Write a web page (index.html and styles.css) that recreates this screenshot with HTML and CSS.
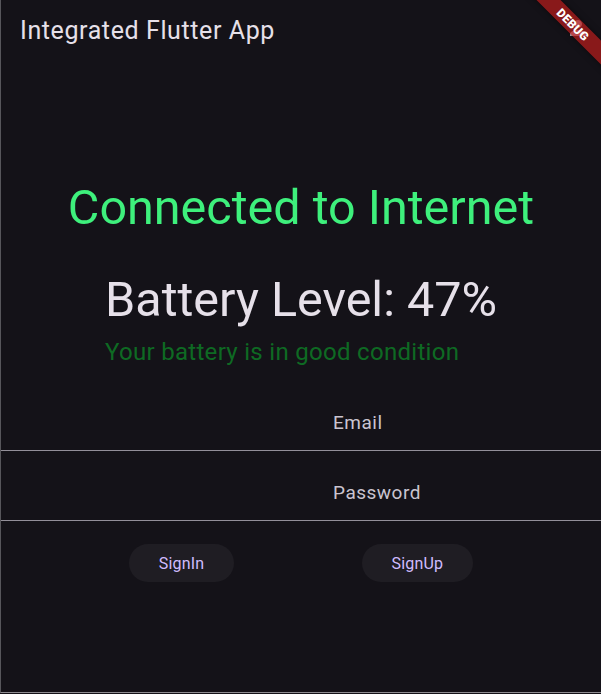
FILE: index.html
```html
<!DOCTYPE html>
<html>
<head>
<meta charset="utf-8">
<link rel="stylesheet" href="styles.css">
</head>
<body>
<div class="app">
  <header class="appbar">
    <span class="title">Integrated Flutter App</span>
    <button class="action" aria-label="account">
      <svg viewBox="0 0 24 24" width="24" height="24"><path fill="#b7b3bd" d="M12 12c2.21 0 4-1.790 4-4s-1.79-4-4-4-4 1.79-4 4 1.79 4 4 4zm0 2c-2.67 0-8 1.34-8 4v2h16v-2c0-2.66-5.33-4-8-4z"/></svg>
    </button>
  </header>
  <main class="content">
    <div class="status">Connected to Internet</div>
    <div class="battery">
      <div class="level">Battery Level: 47%</div>
      <div class="condition">Your battery is in good condition</div>
    </div>
    <div class="field field-first"><span class="label">Email</span></div>
    <div class="field field-second"><span class="label">Password</span></div>
    <div class="actions">
      <button class="pill">SignIn</button>
      <button class="pill">SignUp</button>
    </div>
  </main>
  <div class="debug-banner"><span>DEBUG</span></div>
</div>
</body>
</html>
```
FILE: styles.css
```css
* { box-sizing: border-box; }
html, body {
  margin: 0;
  padding: 0;
  background: #141218;
}
body {
  font-family: Roboto, "Noto Sans", sans-serif;
  color: #e6e0e9;
}
.app {
  position: relative;
  width: 601px;
  height: 693px;
  border-left: 1px solid #57565b;
  border-bottom: 1px solid #8d8b90;
  overflow: hidden;
  background: #141218;
}
.appbar {
  height: 64px;
  display: flex;
  align-items: center;
  justify-content: space-between;
  padding: 0 11px 0 19px;
}
.title {
  font-size: 25px;
  letter-spacing: 0.6px;
  color: #e6e0e9;
  margin-top: -3px;
}
.action {
  background: none;
  border: none;
  padding: 0;
  width: 24px;
  height: 24px;
  margin-top: -8px;
}
.action svg { display: block; }
.content {
  display: flex;
  flex-direction: column;
}
.status {
  margin-top: 117px;
  text-align: center;
  font-size: 48.5px;
  color: #3ef07c;
  line-height: 53px;
}
.battery {
  align-self: center;
  margin-top: 38px;
  display: flex;
  flex-direction: column;
}
.level {
  font-size: 48.5px;
  line-height: 56px;
  color: #e6e0e9;
}
.condition {
  margin-top: 11px;
  font-size: 24px;
  line-height: 26px;
  letter-spacing: 0.3px;
  color: #0e6a23;
}
.field {
  height: 69px;
  padding-top: 30px;
  padding-left: 332px;
  border-bottom: 1px solid #938f99;
}
.field-first {
  margin-top: 17px;
}
.field-second {
  height: 70px;
  padding-top: 31px;
}
.label {
  font-size: 19px;
  line-height: 21px;
  color: #cac4d0;
  letter-spacing: 0.5px;
}
.actions {
  margin-top: 23px;
  display: flex;
  justify-content: space-evenly;
}
.pill {
  height: 38px;
  padding: 0 29.5px;
  border: none;
  border-radius: 19px;
  background: #1f1d23;
  color: #d0bcff;
  font-family: Roboto, sans-serif;
  font-size: 16px;
  font-weight: 400;
  letter-spacing: 0.2px;
}
.debug-banner {
  position: absolute;
  left: 516px;
  top: 16px;
  width: 112px;
  height: 17px;
  transform: rotate(45deg);
  background: rgba(183, 28, 28, 0.72);
  box-shadow: 0 0 6px rgba(0, 0, 0, 0.5);
  display: flex;
  align-items: center;
  justify-content: center;
}
.debug-banner span {
  font-family: Roboto, sans-serif;
  font-size: 12px;
  font-weight: 900;
  color: #ffffff;
  line-height: 1;
  letter-spacing: 0.3px;
}
```
